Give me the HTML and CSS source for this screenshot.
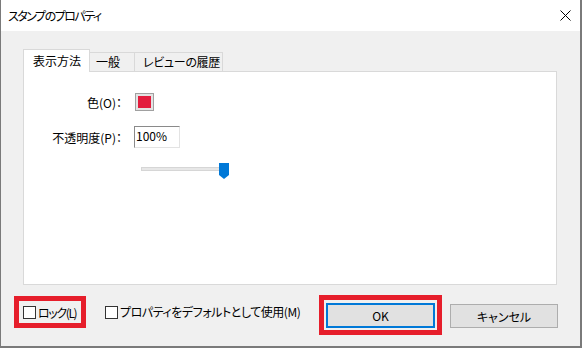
FILE: index.html
```html
<!DOCTYPE html>
<html lang="ja">
<head>
  <meta charset="UTF-8">
  <title>スタンプのプロパティ</title>
  <link rel="stylesheet" href="styles.css">
</head>
<body>
  <div class="window">
    <div class="titlebar">
      <span class="title">スタンプのプロパティ</span>
      <svg class="close" width="11" height="11" viewBox="0 0 11 11">
        <path d="M0.5 0.5 L10.5 10.5 M10.5 0.5 L0.5 10.5" stroke="#000" stroke-width="1" fill="none"/>
      </svg>
    </div>

    <div class="body">
      <div class="sheet">
        <div class="tabs">
          <div class="tab active">表示方法</div>
          <div class="tab general">一般</div>
          <div class="tab history">レビューの履歴</div>
        </div>
        <div class="panel">
          <div class="form">
            <label class="lbl">色(O)：</label>
            <div class="swatch"><span></span></div>

            <label class="lbl" for="opacity">不透明度(P)：</label>
            <div><input class="field" id="opacity" type="text" value="100%"></div>

            <span></span>
            <div class="slider">
              <div class="track"></div>
              <svg class="thumb" width="10" height="16" viewBox="0 0 10 16">
                <path d="M0 0 H10 V12 L5 16 L0 12 Z" fill="#0078d7"/>
              </svg>
            </div>
          </div>
        </div>
      </div>

      <div class="footer">
        <div class="mark lock">
          <span class="check"></span><span class="lock-text">ロック(L)</span>
        </div>
        <div class="opt">
          <span class="check"></span><span class="opt-text">プロパティをデフォルトとして使用(M)</span>
        </div>
        <div class="mark okwrap">
          <button class="btn primary">OK</button>
        </div>
        <button class="btn cancel">キャンセル</button>
      </div>
    </div>
  </div>
</body>
</html>
```

FILE: styles.css
```css
html, body { margin: 0; padding: 0; }
body { font-family: "Noto Sans CJK JP", "Noto Sans", sans-serif; font-size: 12px; color: #000; font-feature-settings: "palt" 1; }

.window { width: 582px; height: 348px; box-sizing: border-box; border: 1px solid #7a7a7a; border-top: none; border-right-width: 2px; border-bottom-width: 2px; display: flex; flex-direction: column; background: #f0f0f0; }

.titlebar { height: 31px; background: #fff; display: flex; align-items: center; justify-content: space-between; padding: 0 9px 0 7px; }
.title { line-height: 14px; letter-spacing: -1.5px; }
.close { display: block; }

.body { flex: 1; padding-top: 17px; }
.sheet { margin: 0 23px 0 22px; }

.tabs { display: flex; align-items: flex-end; height: 23px; }
.tab { height: 19px; line-height: 18px; border: 1px solid #d9d9d9; border-bottom: none; border-left: none; box-sizing: border-box; background: #f0f0f0; }
.tab.active { width: 67px; height: 23px; line-height: 21px; background: #fff; border-left: 1px solid #d9d9d9; padding-left: 9px; position: relative; top: 1px; }
.tab.general { width: 45px; padding-left: 6px; }
.tab.history { width: 88px; padding-left: 8px; letter-spacing: -0.3px; }

.panel { height: 214px; box-sizing: border-box; background: #fff; border: 1px solid #d9d9d9; padding-top: 21px; }

.form { display: grid; grid-template-columns: 98px auto; column-gap: 12px; row-gap: 15px; align-items: center; }
.lbl { text-align: right; }

.swatch { width: 19px; height: 18px; box-sizing: border-box; border: 1px solid #a0a0a0; background: #e3e3e3; padding: 2px; margin-left: 1px; }
.swatch span { display: block; width: 100%; height: 100%; background: #e31c3d; }

.field { width: 46px; height: 22px; box-sizing: border-box; border: 1px solid #e3e3e3; border-top-color: #8a8a8a; border-left-color: #8a8a8a; font: inherit; padding: 0 0 4px 1px; margin: 0; }

.slider { position: relative; width: 90px; height: 16px; margin: -1px 0 0 7px; }
.track { position: absolute; left: 0; top: 5px; width: 84px; height: 4px; box-sizing: border-box; background: #e7e7e7; border: 1px solid #d6d6d6; }
.thumb { position: absolute; left: 78px; top: 1px; display: block; }

.footer { display: flex; align-items: flex-start; padding: 10px 0 0 13px; }
.mark { border: 5px solid #e61e2b; box-sizing: border-box; }
.lock { display: flex; align-items: center; height: 32px; width: 72px; margin-top: 1px; padding: 0 0 0 4px; }
.lock-text { letter-spacing: -1.4px; }
.opt { display: flex; align-items: center; margin: 10px 0 0 19px; line-height: 14px; width: 194px; }
.opt-text { letter-spacing: -0.45px; white-space: nowrap; }
.check { width: 13px; height: 13px; box-sizing: border-box; border: 1px solid #333; background: #fff; margin-right: 2px; flex: none; }

.okwrap { margin-left: 20px; padding: 3px 2px 2px 2px; height: 40px; width: 123px; }
.btn { font: inherit; font-feature-settings: "palt" 1; color: #000; background: #e1e1e1; border: 1px solid #adadad; height: 25px; box-sizing: border-box; padding: 0; display: block; }
.primary { width: 109px; border: 2px solid #0078d7; }
.cancel { width: 108px; margin: 9px 0 0 8px; height: 24px; }
```
